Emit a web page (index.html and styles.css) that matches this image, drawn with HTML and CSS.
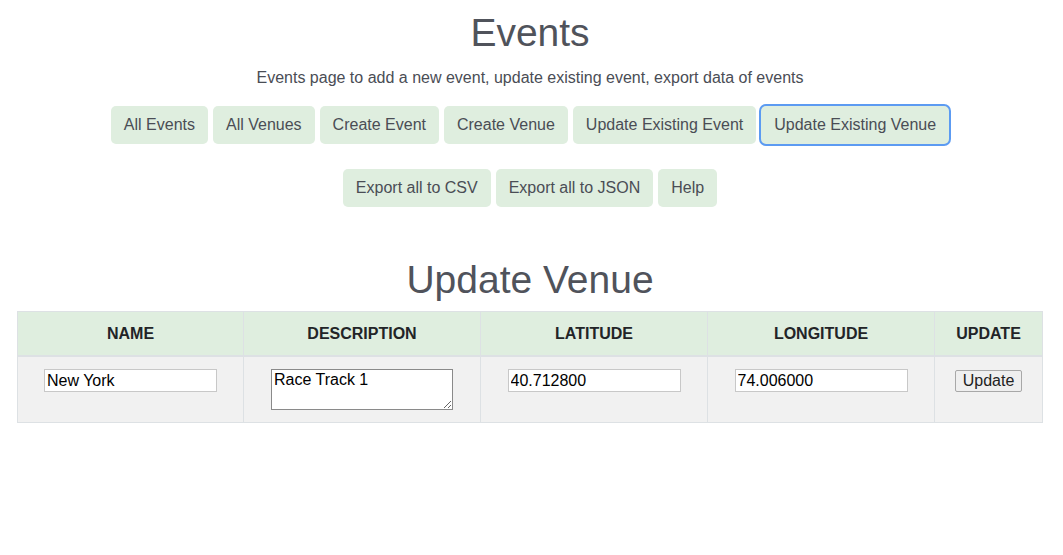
FILE: index.html
```html
<!DOCTYPE html>
<html>
<head>
<meta charset="utf-8">
<link rel="stylesheet" href="styles.css">
</head>
<body>
<div class="page">
  <h1 class="title">Events</h1>
  <p class="subtitle">Events page to add a new event, update existing event, export data of events</p>
  <div class="nav-row">
    <button class="nav-btn">All Events</button>
    <button class="nav-btn">All Venues</button>
    <button class="nav-btn">Create Event</button>
    <button class="nav-btn">Create Venue</button>
    <button class="nav-btn">Update Existing Event</button>
    <button class="nav-btn active">Update Existing Venue</button>
  </div>
  <div class="nav-row second">
    <button class="nav-btn">Export all to CSV</button>
    <button class="nav-btn">Export all to JSON</button>
    <button class="nav-btn">Help</button>
  </div>
  <h2 class="section-title">Update Venue</h2>
  <table class="venue-table">
    <thead>
      <tr>
        <th class="c1">NAME</th>
        <th class="c2">DESCRIPTION</th>
        <th class="c3">LATITUDE</th>
        <th class="c4">LONGITUDE</th>
        <th class="c5">UPDATE</th>
      </tr>
    </thead>
    <tbody>
      <tr>
        <td><input class="field" type="text" value="New York"></td>
        <td><textarea class="area">Race Track 1</textarea></td>
        <td><input class="field" type="text" value="40.712800"></td>
        <td><input class="field" type="text" value="74.006000"></td>
        <td><button class="update-btn">Update</button></td>
      </tr>
    </tbody>
  </table>
</div>
</body>
</html>
```
FILE: styles.css
```css
html, body {
  margin: 0;
  padding: 0;
  background: #ffffff;
}
body {
  font-family: "Liberation Sans", Arial, sans-serif;
  color: #4a4d55;
}
.page {
  padding: 0 20px 0 17px;
  display: flex;
  flex-direction: column;
  align-items: center;
}
.title {
  margin: 11px 0 0;
  font-size: 39px;
  line-height: 44px;
  font-weight: normal;
  color: #50535b;
}
.subtitle {
  margin: 13px 0 0;
  font-size: 16px;
  line-height: 20px;
  color: #4a4d55;
}
.nav-row {
  margin-top: 18px;
  display: flex;
  justify-content: center;
  gap: 5px;
}
.nav-row.second {
  margin-top: 25px;
}
.nav-btn {
  font-family: "Liberation Sans", Arial, sans-serif;
  font-size: 16px;
  color: #4a4d55;
  background: #dfeedf;
  border: none;
  border-radius: 5px;
  height: 38px;
  padding: 0 13px;
  outline: none;
}
.nav-btn.active {
  box-shadow: 0 0 0 2px #5c9bf2;
}
.section-title {
  margin: 51px 0 0;
  font-size: 39px;
  line-height: 44px;
  font-weight: normal;
  color: #50535b;
}
.venue-table {
  margin-top: 9px;
  width: 1026px;
  border-collapse: collapse;
  align-self: stretch;
}
.venue-table th {
  background: #dfeedf;
  color: #222427;
  font-size: 16px;
  font-weight: bold;
  height: 43px;
  padding: 0;
  border: 1px solid #dde1e4;
  border-bottom: 2px solid #dde1e4;
}
.venue-table td {
  background: #f1f1f1;
  border: 1px solid #dde1e4;
  padding: 12px 0 12px;
  text-align: center;
  vertical-align: top;
}
.c1 { width: 225px; }
.c2 { width: 236px; }
.c3 { width: 226px; }
.c4 { width: 226px; }
.field {
  display: block;
  font-family: "Liberation Sans", Arial, sans-serif;
  font-size: 16px;
  color: #000;
  width: 173px;
  height: 23px;
  box-sizing: border-box;
  border: 1px solid #c8c8c8;
  padding: 1px 2px;
  margin: 0 auto;
  background: #fff;
}
.area {
  display: block;
  font-family: "Liberation Sans", Arial, sans-serif;
  font-size: 16px;
  color: #000;
  width: 182px;
  height: 41px;
  box-sizing: border-box;
  border: 1px solid #8a8a8a;
  padding: 1px 2px;
  margin: 0 auto;
  background: #fff;
  resize: both;
}
.update-btn {
  display: block;
  font-family: "Liberation Sans", Arial, sans-serif;
  font-size: 16px;
  color: #222;
  background: #efefef;
  border: 1px solid #a8a8a8;
  border-radius: 2px;
  height: 22px;
  padding: 0 7px;
  margin: 1px auto 0;
  line-height: 18px;
}
```
